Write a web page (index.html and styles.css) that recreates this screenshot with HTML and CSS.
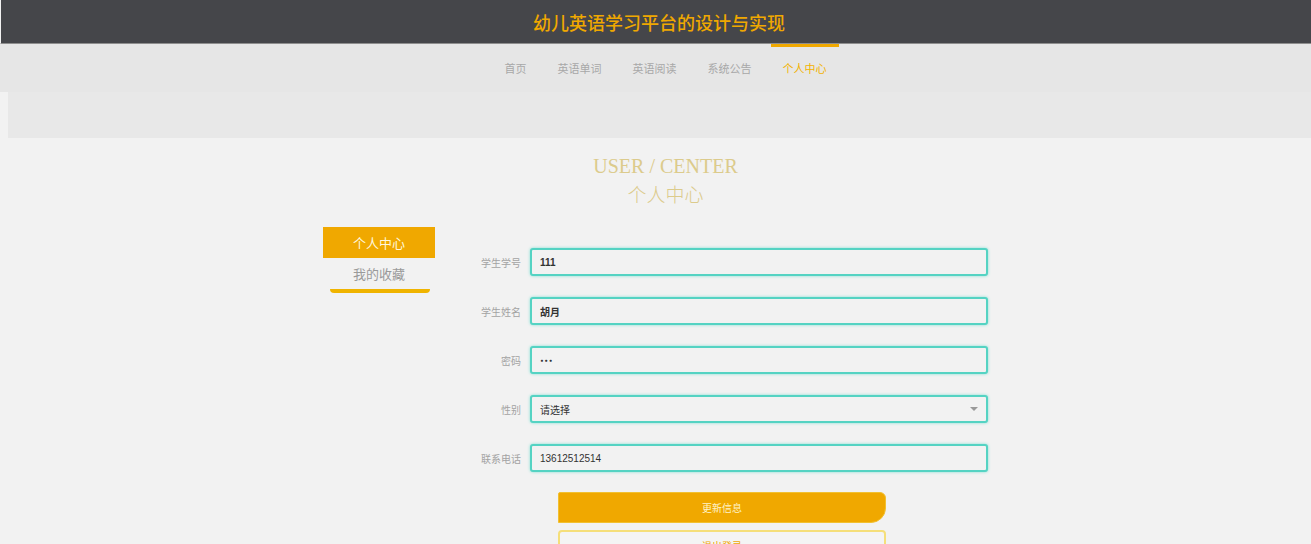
FILE: index.html
```html
<!DOCTYPE html>
<html lang="zh">
<head>
<meta charset="utf-8">
<title>幼儿英语学习平台的设计与实现</title>
<link rel="stylesheet" href="styles.css">
</head>
<body>
<header class="topbar">
  <h1 class="site-title">幼儿英语学习平台的设计与实现</h1>
</header>
<nav class="nav">
  <a class="nav-item">首页</a>
  <a class="nav-item">英语单词</a>
  <a class="nav-item">英语阅读</a>
  <a class="nav-item">系统公告</a>
  <a class="nav-item active">个人中心</a>
</nav>
<div class="banner"></div>
<section class="page-title">
  <div class="en">USER / CENTER</div>
  <div class="cn">个人中心</div>
</section>
<main class="main">
  <aside class="side">
    <div class="side-item active">个人中心</div>
    <div class="side-item">我的收藏</div>
    <div class="side-line"></div>
  </aside>
  <form class="form">
    <div class="row">
      <label class="label">学生学号</label>
      <div class="field bold">111</div>
    </div>
    <div class="row">
      <label class="label">学生姓名</label>
      <div class="field bold">胡月</div>
    </div>
    <div class="row">
      <label class="label">密码</label>
      <div class="field bold dots">•••</div>
    </div>
    <div class="row">
      <label class="label">性别</label>
      <div class="field select">请选择<span class="caret"></span></div>
    </div>
    <div class="row">
      <label class="label">联系电话</label>
      <div class="field">13612512514</div>
    </div>
    <div class="buttons">
      <button type="button" class="btn primary">更新信息</button>
      <button type="button" class="btn outline">退出登录</button>
    </div>
  </form>
</main>
</body>
</html>
```
FILE: styles.css
```css
* { box-sizing: border-box; }
html, body { margin: 0; padding: 0; }
body {
  background: #f2f2f2;
  font-family: "Noto Sans CJK SC", "Noto Sans", sans-serif;
  overflow: hidden;
  height: 544px;
}
.topbar {
  height: 44px;
  background: #45464a;
  border-bottom: 1px solid #8e8e8e;
  border-left: 1px solid #f2f2f2;
  display: flex;
  align-items: center;
  justify-content: center;
  padding-left: 6px;
}
.site-title {
  margin: 0;
  font-size: 18px;
  font-weight: 500;
  color: #f0a800;
  line-height: 1;
}
.nav {
  height: 48px;
  background: #e6e6e6;
  display: flex;
  justify-content: center;
  gap: 7px;
  padding-left: 20px;
}
.nav-item {
  padding: 0 12px;
  font-size: 11px;
  color: #a8a8a8;
  height: 48px;
  border-top: 3px solid transparent;
  line-height: 42px;
}
.nav-item.active {
  color: #f2b200;
  border-top-color: #f0a800;
}
.banner {
  margin-left: 8px;
  height: 46px;
  background: #e8e8e8;
}
.page-title {
  text-align: center;
  padding: 14px 0 0 20px;
  color: #dccb8c;
}
.page-title .en {
  font-family: "Liberation Serif", serif;
  font-size: 20px;
  line-height: 28px;
}
.page-title .cn {
  font-size: 19px;
  font-weight: 300;
  line-height: 28px;
}
.main {
  width: 665px;
  margin: 0 auto;
  padding-top: 19px;
  display: flex;
  align-items: flex-start;
}
.side {
  width: 112px;
  flex: none;
}
.side-item {
  height: 31px;
  line-height: 31px;
  text-align: center;
  font-size: 13px;
  color: #9a9a9a;
}
.side-item.active {
  background: #f0a800;
  color: #fff7dc;
}
.side-line {
  margin: 0 5px 0 7px;
  height: 4px;
  background: #f0b400;
  border-radius: 0 0 6px 6px;
}
.form {
  flex: 1;
  margin-left: 26px;
  padding-top: 21px;
}
.row {
  display: flex;
  align-items: center;
  margin-bottom: 21px;
}
.label {
  width: 69px;
  padding-right: 9px;
  text-align: right;
  font-size: 10px;
  color: #a3a3a3;
  flex: none;
}
.field {
  flex: 1;
  height: 28px;
  border: 2px solid #55d3c3;
  border-radius: 3px;
  box-shadow: 0 0 3px #7fe0d3;
  background: #f2f2f2;
  padding-left: 8px;
  display: flex;
  align-items: center;
  font-size: 10px;
  color: #333;
  font-family: "Liberation Sans", "Noto Sans CJK SC", sans-serif;
}
.field.bold { font-weight: bold; }
.field.dots {
  font-family: "DejaVu Sans", sans-serif;
  font-size: 6px;
  letter-spacing: 0.5px;
}
.field.select { justify-content: space-between; padding-right: 8px; }
.caret {
  width: 0;
  height: 0;
  border-left: 4px solid transparent;
  border-right: 4px solid transparent;
  border-top: 4px solid #999;
}
.buttons {
  margin-left: 97px;
  width: 328px;
  display: flex;
  flex-direction: column;
  gap: 7px;
  margin-top: -1px;
}
.btn {
  height: 31px;
  font-family: "Noto Sans CJK SC", sans-serif;
  font-size: 10px;
  cursor: pointer;
}
.primary {
  background: #f0a800;
  border: 1px solid #f2c030;
  color: #fff3c8;
  border-radius: 2px 6px 15px 0;
}
.outline {
  background: #f4f4f4;
  border: 2px solid #f5df7a;
  color: #f0a800;
  border-radius: 4px;
}
```
